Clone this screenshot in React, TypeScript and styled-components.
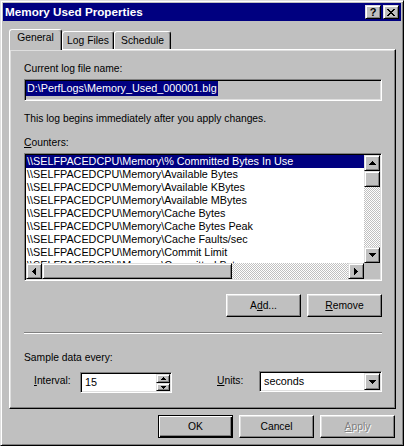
import React from "react";
import styled, { createGlobalStyle, css } from "styled-components";

const FACE = "#c0c0c0";
const NAVY = "#000080";

const Global = createGlobalStyle`
  html, body { margin: 0; padding: 0; background: ${FACE}; }
  body {
    font-family: "Liberation Sans", Arial, sans-serif;
    font-size: 10.3px;
    color: #000;
  }
  #root { width: 404px; height: 446px; }
`;

const raised = css`
  border: 1px solid;
  border-color: #fff #000 #000 #fff;
  box-shadow: inset -1px -1px #808080, inset 1px 1px #dfdfdf;
`;

const scrollRaised = css`
  border: 1px solid;
  border-color: #dfdfdf #000 #000 #dfdfdf;
  box-shadow: inset 1px 1px #fff, inset -1px -1px #808080;
`;

const sunken = css`
  border: 1px solid;
  border-color: #808080 #fff #fff #808080;
  box-shadow: inset 1px 1px #000, inset -1px -1px #dfdfdf;
`;

const Window = styled.div`
  box-sizing: border-box;
  width: 404px;
  height: 446px;
  background: ${FACE};
  border: 1px solid;
  border-color: #dfdfdf #000 #000 #dfdfdf;
  box-shadow: inset 1px 1px #fff, inset -1px -1px #808080;
  padding: 2px;
  display: flex;
  flex-direction: column;
  overflow: hidden;
`;

const TitleBar = styled.div`
  display: flex;
  align-items: center;
  height: 18px;
  flex: none;
  background: ${NAVY};
  padding: 0 2px;
  color: #fff;
`;

const TitleText = styled.div`
  flex: 1;
  font-weight: bold;
  font-size: 11.7px;
  line-height: 14px;
  white-space: nowrap;
`;

const CaptionButtons = styled.div`
  display: flex;
  gap: 2px;
`;

const CaptionButton = styled.div`
  box-sizing: border-box;
  width: 16px;
  height: 14px;
  ${scrollRaised};
  background: ${FACE};
  color: #000;
  display: flex;
  align-items: center;
  justify-content: center;
  font-weight: bold;
  font-size: 11px;
  line-height: 12px;
`;

const Body = styled.div`
  display: flex;
  flex-direction: column;
  padding: 0 5px 0 6px;
`;

const TabStrip = styled.div`
  display: flex;
  align-items: flex-end;
  height: 20px;
  margin-top: 8px;
  position: relative;
  z-index: 1;
`;

const Tab = styled.div<{ $active?: boolean; $w: number }>`
  box-sizing: border-box;
  width: ${(p) => p.$w}px;
  height: ${(p) => (p.$active ? 21 : 18)}px;
  margin-bottom: ${(p) => (p.$active ? -1 : 0)}px;
  padding-top: ${(p) => (p.$active ? 1 : 2)}px;
  border: 1px solid;
  border-bottom: none;
  border-color: #fff #000 transparent #fff;
  border-radius: 3px 3px 0 0;
  box-shadow: inset -1px 0 #808080;
  background: ${FACE};
  text-align: center;
  line-height: 13px;
  white-space: nowrap;
`;

const Panel = styled.div`
  box-sizing: border-box;
  height: 360px;
  border: 1px solid;
  border-color: #fff #000 #000 #fff;
  box-shadow: inset -1px -1px #808080, inset 1px 1px #dfdfdf;
  padding: 12px 13px 0 14px;
  display: flex;
  flex-direction: column;
`;

const Label = styled.div<{ $mt?: number }>`
  line-height: 13px;
  margin-top: ${(p) => p.$mt ?? 0}px;
  white-space: nowrap;
`;

const ReadOnlyField = styled.div`
  box-sizing: border-box;
  height: 22px;
  margin-top: 4px;
  ${sunken};
  background: ${FACE};
  padding: 1px;
  font-size: 10.8px;
  display: flex;
`;

const Selected = styled.span`
  display: inline-block;
  height: 15px;
  line-height: 15px;
  padding: 0 1px;
  background: ${NAVY};
  color: #fff;
  white-space: nowrap;
`;

const ListBox = styled.div`
  box-sizing: border-box;
  height: 128px;
  margin-top: 4px;
  ${sunken};
  background: #fff;
  padding: 1px;
  display: grid;
  grid-template-columns: 1fr 16px;
  grid-template-rows: 1fr 16px;
`;

const Items = styled.div`
  overflow: hidden;
  font-size: 10.8px;
`;

const Item = styled.div<{ $selected?: boolean }>`
  line-height: 13px;
  height: 13px;
  padding-left: 1px;
  white-space: nowrap;
  background: ${(p) => (p.$selected ? NAVY : "transparent")};
  color: ${(p) => (p.$selected ? "#fff" : "#000")};
`;

const track = css`
  background-color: #fff;
  background-image: repeating-conic-gradient(${FACE} 0 25%, #fff 0 50%);
  background-size: 2px 2px;
`;

const VScroll = styled.div`
  display: flex;
  flex-direction: column;
`;

const HScroll = styled.div`
  display: flex;
`;

const Track = styled.div`
  flex: 1;
  ${track};
`;

const ScrollBtn = styled.div`
  box-sizing: border-box;
  width: 16px;
  height: 16px;
  flex: none;
  ${scrollRaised};
  background: ${FACE};
  display: flex;
  align-items: center;
  justify-content: center;
`;

const Thumb = styled.div<{ $w?: number; $h?: number }>`
  box-sizing: border-box;
  flex: none;
  width: ${(p) => p.$w ?? 16}px;
  height: ${(p) => p.$h ?? 16}px;
  ${scrollRaised};
  background: ${FACE};
`;

const Corner = styled.div`
  background: ${FACE};
`;

const ButtonRow = styled.div<{ $mt: number; $pr?: number }>`
  display: flex;
  justify-content: flex-end;
  gap: 6px;
  margin-top: ${(p) => p.$mt}px;
  padding-right: ${(p) => p.$pr ?? 0}px;
`;

const PushButton = styled.div<{ $default?: boolean; $disabled?: boolean }>`
  box-sizing: border-box;
  width: 75px;
  height: 23px;
  background: ${FACE};
  display: flex;
  align-items: center;
  justify-content: center;
  line-height: 13px;
  ${(p) =>
    p.$default
      ? css`
          border: 1px solid #000;
          box-shadow: inset 1px 1px #fff, inset -1px -1px #000,
            inset -2px -2px #808080;
        `
      : raised};
  ${(p) =>
    p.$disabled &&
    css`
      color: #808080;
      text-shadow: 1px 1px #fff;
    `}
`;

const Separator = styled.div`
  margin-top: 15px;
  border-top: 1px solid #808080;
  border-bottom: 1px solid #fff;
`;

const SettingsRow = styled.div`
  display: flex;
  justify-content: space-between;
  align-items: flex-start;
  margin-top: 7px;
  height: 22px;
`;

const Group = styled.div<{ $pl?: number }>`
  display: flex;
  align-items: flex-start;
  padding-left: ${(p) => p.$pl ?? 0}px;
`;

const FieldLabel = styled.div<{ $w: number }>`
  width: ${(p) => p.$w}px;
  line-height: 13px;
  margin-top: 3px;
  white-space: nowrap;
`;

const Field = styled.div<{ $w: number; $mt?: number }>`
  box-sizing: border-box;
  width: ${(p) => p.$w}px;
  height: 21px;
  margin-top: ${(p) => p.$mt ?? 0}px;
  ${sunken};
  background: #fff;
  padding: 1px;
  display: flex;
`;

const FieldText = styled.div<{ $pl: number }>`
  flex: 1;
  line-height: 17px;
  font-size: 10.8px;
  padding-left: ${(p) => p.$pl}px;
  white-space: nowrap;
`;

const SpinColumn = styled.div`
  display: flex;
  flex-direction: column;
  width: 14px;
`;

const SpinBtn = styled.div<{ $h: number }>`
  box-sizing: border-box;
  height: ${(p) => p.$h}px;
  ${scrollRaised};
  background: ${FACE};
  display: flex;
  align-items: center;
  justify-content: center;
`;

const DropBtn = styled.div`
  box-sizing: border-box;
  width: 16px;
  height: 17px;
  ${scrollRaised};
  background: ${FACE};
  display: flex;
  align-items: center;
  justify-content: center;
`;

type Dir = "up" | "down" | "left" | "right";

const Arrow: React.FC<{ dir: Dir; size?: number }> = ({ dir, size = 4 }) => {
  const rects: React.ReactNode[] = [];
  const w = size * 2 - 1;
  for (let i = 0; i < size; i++) {
    const len = i * 2 + 1;
    const off = size - 1 - i;
    const row = dir === "up" || dir === "left" ? i : size - 1 - i;
    if (dir === "up" || dir === "down") {
      rects.push(<rect key={i} x={off} y={row} width={len} height={1} />);
    } else {
      rects.push(<rect key={i} x={row} y={off} width={1} height={len} />);
    }
  }
  const vertical = dir === "up" || dir === "down";
  return (
    <svg
      width={vertical ? w : size}
      height={vertical ? size : w}
      shapeRendering="crispEdges"
      fill="#000"
    >
      {rects}
    </svg>
  );
};

const CloseGlyph: React.FC = () => (
  <svg width={8} height={7} shapeRendering="crispEdges" fill="#000">
    <rect x={0} y={0} width={2} height={1} />
    <rect x={6} y={0} width={2} height={1} />
    <rect x={1} y={1} width={2} height={1} />
    <rect x={5} y={1} width={2} height={1} />
    <rect x={2} y={2} width={4} height={1} />
    <rect x={3} y={3} width={2} height={1} />
    <rect x={2} y={4} width={4} height={1} />
    <rect x={1} y={5} width={2} height={1} />
    <rect x={5} y={5} width={2} height={1} />
    <rect x={0} y={6} width={2} height={1} />
    <rect x={6} y={6} width={2} height={1} />
  </svg>
);

const counters = [
  "% Committed Bytes In Use",
  "Available Bytes",
  "Available KBytes",
  "Available MBytes",
  "Cache Bytes",
  "Cache Bytes Peak",
  "Cache Faults/sec",
  "Commit Limit",
  "Committed Bytes",
];

export default function App() {
  return (
    <>
      <Global />
      <Window>
        <TitleBar>
          <TitleText>Memory Used Properties</TitleText>
          <CaptionButtons>
            <CaptionButton>?</CaptionButton>
            <CaptionButton>
              <CloseGlyph />
            </CaptionButton>
          </CaptionButtons>
        </TitleBar>
        <Body>
          <TabStrip>
            <Tab $active $w={53}>General</Tab>
            <Tab $w={52}>Log Files</Tab>
            <Tab $w={57}>Schedule</Tab>
          </TabStrip>
          <Panel>
            <Label>Current log file name:</Label>
            <ReadOnlyField>
              <Selected>D:\PerfLogs\Memory_Used_000001.blg</Selected>
            </ReadOnlyField>
            <Label $mt={11}>This log begins immediately after you apply changes.</Label>
            <Label $mt={11}>
              <u>C</u>ounters:
            </Label>
            <ListBox>
              <Items>
                {counters.map((c, i) => (
                  <Item key={c} $selected={i === 0}>
                    {"\\\\SELFPACEDCPU\\Memory\\" + c}
                  </Item>
                ))}
              </Items>
              <VScroll>
                <ScrollBtn>
                  <Arrow dir="up" />
                </ScrollBtn>
                <Thumb />
                <Track />
                <ScrollBtn>
                  <Arrow dir="down" />
                </ScrollBtn>
              </VScroll>
              <HScroll>
                <ScrollBtn>
                  <Arrow dir="left" />
                </ScrollBtn>
                <Thumb $w={190} />
                <Track />
                <ScrollBtn>
                  <Arrow dir="right" />
                </ScrollBtn>
              </HScroll>
              <Corner />
            </ListBox>
            <ButtonRow $mt={13}>
              <PushButton>
                <span>
                  A<u>d</u>d...
                </span>
              </PushButton>
              <PushButton>
                <span>
                  <u>R</u>emove
                </span>
              </PushButton>
            </ButtonRow>
            <Separator />
            <Label $mt={17}>Sample data every:</Label>
            <SettingsRow>
              <Group $pl={10}>
                <FieldLabel $w={46}>
                  <u>I</u>nterval:
                </FieldLabel>
                <Field $w={92} $mt={1}>
                  <FieldText $pl={3}>15</FieldText>
                  <SpinColumn>
                    <SpinBtn $h={9}>
                      <Arrow dir="up" size={3} />
                    </SpinBtn>
                    <SpinBtn $h={8}>
                      <Arrow dir="down" size={3} />
                    </SpinBtn>
                  </SpinColumn>
                </Field>
              </Group>
              <Group>
                <FieldLabel $w={42}>
                  <u>U</u>nits:
                </FieldLabel>
                <Field $w={123}>
                  <FieldText $pl={3}>seconds</FieldText>
                  <DropBtn>
                    <Arrow dir="down" />
                  </DropBtn>
                </Field>
              </Group>
            </SettingsRow>
          </Panel>
          <ButtonRow $mt={6} $pr={1}>
            <PushButton $default>OK</PushButton>
            <PushButton>Cancel</PushButton>
            <PushButton $disabled>
              <span>
                <u>A</u>pply
              </span>
            </PushButton>
          </ButtonRow>
        </Body>
      </Window>
    </>
  );
}
